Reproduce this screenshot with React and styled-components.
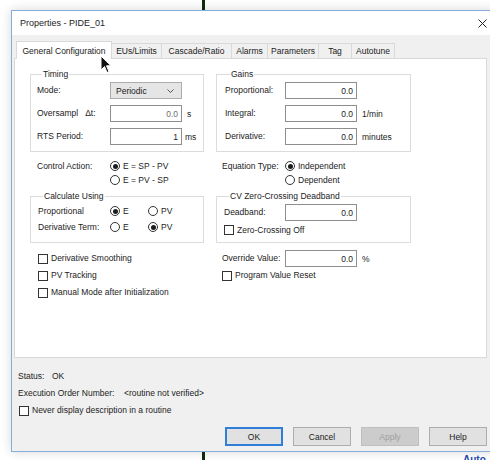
import React from 'react';
import styled, { createGlobalStyle } from 'styled-components';

const GlobalStyle = createGlobalStyle`
  html, body {
    margin: 0;
    padding: 0;
    background: #fff;
  }
  body {
    font-family: 'Liberation Sans', Arial, sans-serif;
    font-size: 8.5px;
    color: #222;
  }
`;

const Page = styled.div`
  position: relative;
  width: 490px;
  height: 460px;
  overflow: hidden;
  padding: 10px 0 0 11px;
  box-sizing: border-box;
`;

// dark wire of the diagram behind the dialog
const Wire = styled.div`
  position: absolute;
  left: 202px;
  top: 0;
  width: 3px;
  height: 100%;
  background: #0f2e10;
`;

const Dialog = styled.div`
  position: relative;
  z-index: 1;
  width: 485px;
  height: 442px;
  box-sizing: border-box;
  border: 1px solid #86aedb;
  background: #f0f0f0;
  box-shadow: 0 0 10px rgba(0, 0, 0, 0.16);
  display: flex;
  flex-direction: column;
`;

const TitleBar = styled.div`
  flex: 0 0 24px;
  background: #fff;
  display: flex;
  align-items: center;
  justify-content: space-between;
  padding: 0 8px;
  font-size: 9px;
`;

const Body = styled.div`
  flex: 1;
  display: flex;
  flex-direction: column;
  padding: 6px 8px 5px 2px;
`;

const TabStrip = styled.div`
  display: flex;
  align-items: flex-end;
  height: 18px;
  margin: 0 0 -1px 2px;
  position: relative;
  z-index: 1;
`;

const Tab = styled.div`
  width: ${(p) => p.$w}px;
  height: ${(p) => (p.$active ? 18 : 15)}px;
  margin: 0 -1px ${(p) => (p.$active ? 0 : 1)}px 0;
  box-sizing: border-box;
  border: 1px solid #d9d9d9;
  border-bottom: none;
  background: ${(p) => (p.$active ? '#fff' : '#f0f0f0')};
  display: flex;
  align-items: center;
  justify-content: center;
  white-space: nowrap;
  position: relative;
  z-index: ${(p) => (p.$active ? 2 : 1)};
`;

const Panel = styled.div`
  flex: 0 0 300px;
  box-sizing: border-box;
  border: 1px solid #d9d9d9;
  background: #fff;
  padding: 10px 0 0 15px;
`;

const Pair = styled.div`
  display: grid;
  grid-template-columns: 174px 195px;
  column-gap: 12px;
  margin-top: ${(p) => p.$top || 0}px;
`;

const GroupBox = styled.fieldset`
  margin: 0;
  min-width: 0;
  box-sizing: border-box;
  border: 1px solid #dcdcdc;
  padding: 3px 0 ${(p) => p.$bottom}px ${(p) => p.$left}px;
`;

const Legend = styled.legend`
  margin-left: 5px;
  padding: 0 1px;
  font-size: 8.5px;
  line-height: 10px;
`;

const FieldGrid = styled.div`
  display: grid;
  grid-template-columns: ${(p) => p.$label}px ${(p) => p.$input}px auto;
  row-gap: ${(p) => (p.$gap ?? 6)}px;
  align-items: center;
`;

const Label = styled.span`
  white-space: nowrap;
  line-height: 11px;
`;

const Unit = styled.span`
  margin-left: ${(p) => p.$gap || 5}px;
  white-space: nowrap;
`;

const Field = styled.div`
  height: 17px;
  box-sizing: border-box;
  border: 1px solid #8e8e8e;
  background: #fff;
  display: flex;
  align-items: center;
  justify-content: flex-end;
  padding-right: 3px;
  color: ${(p) => (p.$muted ? '#6e6e6e' : '#222')};
`;

const Select = styled.div`
  height: 17px;
  box-sizing: border-box;
  border: 1px solid #acacac;
  background: #e5e5e5;
  display: flex;
  align-items: center;
  justify-content: space-between;
  padding: 0 7px 0 5px;
`;

const ChoiceGrid = styled.div`
  display: grid;
  grid-template-columns: ${(p) => p.$cols};
  grid-auto-rows: ${(p) => p.$row || 14}px;
  row-gap: ${(p) => p.$gap || 0}px;
  align-items: center;
  padding-left: ${(p) => p.$left || 0}px;
`;

const Option = styled.label`
  display: flex;
  align-items: center;
  gap: 3px;
  white-space: nowrap;
  line-height: 11px;
`;

const RadioMark = styled.span`
  width: 10px;
  height: 10px;
  box-sizing: border-box;
  border-radius: 50%;
  border: 1px solid #333;
  background: #fff;
  display: inline-flex;
  align-items: center;
  justify-content: center;
  flex: none;
  &::after {
    content: '';
    width: 5px;
    height: 5px;
    border-radius: 50%;
    background: ${(p) => (p.$on ? '#1c1c1c' : 'transparent')};
  }
`;

const Box = styled.span`
  width: 10px;
  height: 10px;
  box-sizing: border-box;
  border: 1px solid #333;
  background: #fff;
  flex: none;
`;

const Stack = styled.div`
  display: flex;
  flex-direction: column;
  padding-left: ${(p) => p.$left || 0}px;
`;

const Line = styled.div`
  height: ${(p) => p.$h || 17}px;
  margin-top: ${(p) => p.$top || 0}px;
  display: flex;
  align-items: center;
`;

const Footer = styled.div`
  margin-top: 9px;
  padding-left: 4px;
  display: flex;
  flex-direction: column;
`;

const InfoLine = styled.div`
  height: 17.5px;
  display: flex;
  align-items: center;
  padding-left: ${(p) => p.$left || 0}px;
`;

const InfoKey = styled.span`
  width: ${(p) => p.$w}px;
  white-space: nowrap;
`;

const Buttons = styled.div`
  margin-top: auto;
  display: flex;
  justify-content: flex-end;
  gap: 10px;
`;

const Button = styled.button`
  width: 58px;
  height: 19px;
  box-sizing: border-box;
  font: inherit;
  font-size: 8.5px;
  padding: 0;
  border: ${(p) => (p.$primary ? '2px solid #2f7fd9' : '1px solid #adadad')};
  background: ${(p) => (p.$disabled ? '#cccccc' : '#e1e1e1')};
  color: ${(p) => (p.$disabled ? '#a0a0a0' : '#222')};
  ${(p) => p.$disabled && 'border-color: #bfbfbf;'}
`;

const Caption = styled.div`
  margin: 3px 0 0 452px;
  color: #2046b8;
  font-size: 10px;
  font-weight: bold;
  line-height: 10px;
`;

const Cursor = styled.svg`
  position: absolute;
  left: 100px;
  top: 55px;
  z-index: 5;
`;

const Radio = ({ on, children }) => (
  <Option>
    <RadioMark $on={on} />
    {children}
  </Option>
);

const Check = ({ children }) => (
  <Option>
    <Box />
    {children}
  </Option>
);

const tabs = [
  ['General Configuration', 96],
  ['EUs/Limits', 51],
  ['Cascade/Ratio', 71],
  ['Alarms', 37],
  ['Parameters', 52],
  ['Tag', 34],
  ['Autotune', 44],
];

export default function App() {
  return (
    <>
      <GlobalStyle />
      <Page>
        <Wire />
        <Dialog>
          <TitleBar>
            <span>Properties - PIDE_01</span>
            <svg width="9" height="9" viewBox="0 0 9 9">
              <path d="M0.5 0.5 L8.5 8.5 M8.5 0.5 L0.5 8.5" stroke="#222" strokeWidth="1" />
            </svg>
          </TitleBar>
          <Body>
            <TabStrip>
              {tabs.map(([name, w], i) => (
                <Tab key={name} $w={w} $active={i === 0}>
                  {name}
                </Tab>
              ))}
            </TabStrip>
            <Panel>
              <Pair>
                <GroupBox $left={6} $bottom={6}>
                  <Legend>Timing</Legend>
                  <FieldGrid $label={73} $input={72}>
                    <Label>Mode:</Label>
                    <Select>
                      <span>Periodic</span>
                      <svg width="7" height="4" viewBox="0 0 7 4">
                        <path d="M0.5 0.5 L3.5 3.5 L6.5 0.5" fill="none" stroke="#555" />
                      </svg>
                    </Select>
                    <span />
                    <Label>Oversampl&nbsp;&nbsp;&nbsp;Δt:</Label>
                    <Field $muted>0.0</Field>
                    <Unit>s</Unit>
                    <Label>RTS Period:</Label>
                    <Field>1</Field>
                    <Unit $gap={3}>ms</Unit>
                  </FieldGrid>
                </GroupBox>
                <GroupBox $left={8} $bottom={6}>
                  <Legend>Gains</Legend>
                  <FieldGrid $label={60} $input={72}>
                    <Label>Proportional:</Label>
                    <Field>0.0</Field>
                    <span />
                    <Label>Integral:</Label>
                    <Field>0.0</Field>
                    <Unit>1/min</Unit>
                    <Label>Derivative:</Label>
                    <Field>0.0</Field>
                    <Unit>minutes</Unit>
                  </FieldGrid>
                </GroupBox>
              </Pair>

              <Pair $top={7}>
                <ChoiceGrid $cols="73px auto" $left={7}>
                  <Label>Control Action:</Label>
                  <Radio on>E = SP - PV</Radio>
                  <span />
                  <Radio>E = PV - SP</Radio>
                </ChoiceGrid>
                <ChoiceGrid $cols="63px auto" $left={6}>
                  <Label>Equation Type:</Label>
                  <Radio on>Independent</Radio>
                  <span />
                  <Radio>Dependent</Radio>
                </ChoiceGrid>
              </Pair>

              <Pair $top={4}>
                <GroupBox $left={7} $bottom={6}>
                  <Legend>Calculate Using</Legend>
                  <ChoiceGrid $cols="72px 38px auto" $gap={2}>
                    <Label>Proportional</Label>
                    <Radio on>E</Radio>
                    <Radio>PV</Radio>
                    <Label>Derivative Term:</Label>
                    <Radio>E</Radio>
                    <Radio on>PV</Radio>
                  </ChoiceGrid>
                </GroupBox>
                <GroupBox $left={7} $bottom={5}>
                  <Legend>CV Zero-Crossing Deadband</Legend>
                  <FieldGrid $label={61} $input={72} $gap={2}>
                    <Label>Deadband:</Label>
                    <Field>0.0</Field>
                    <span />
                  </FieldGrid>
                  <Line $h={14} $top={2}>
                    <Check>Zero-Crossing Off</Check>
                  </Line>
                </GroupBox>
              </Pair>

              <Pair $top={7}>
                <Stack $left={8}>
                  <Line>
                    <Check>Derivative Smoothing</Check>
                  </Line>
                  <Line>
                    <Check>PV Tracking</Check>
                  </Line>
                  <Line>
                    <Check>Manual Mode after Initialization</Check>
                  </Line>
                </Stack>
                <Stack $left={6}>
                  <FieldGrid $label={63} $input={72}>
                    <Label>Override Value:</Label>
                    <Field>0.0</Field>
                    <Unit>%</Unit>
                  </FieldGrid>
                  <Line>
                    <Check>Program Value Reset</Check>
                  </Line>
                </Stack>
              </Pair>
            </Panel>

            <Footer>
              <InfoLine>
                <InfoKey $w={34}>Status:</InfoKey>
                <span>OK</span>
              </InfoLine>
              <InfoLine>
                <InfoKey $w={106}>Execution Order Number:</InfoKey>
                <span>&lt;routine not verified&gt;</span>
              </InfoLine>
              <InfoLine $left={1}>
                <Check>Never display description in a routine</Check>
              </InfoLine>
            </Footer>

            <Buttons>
              <Button $primary>OK</Button>
              <Button>Cancel</Button>
              <Button $disabled>Apply</Button>
              <Button>Help</Button>
            </Buttons>
          </Body>
        </Dialog>
        <Caption>Auto</Caption>
        <Cursor width="12" height="19" viewBox="0 0 12 19">
          <path
            d="M1 1 L1 15 L4.5 11.5 L7 17.5 L9 16.6 L6.5 10.8 L11 10.8 Z"
            fill="#111"
            stroke="#fff"
            strokeWidth="1"
            strokeLinejoin="round"
          />
        </Cursor>
      </Page>
    </>
  );
}
